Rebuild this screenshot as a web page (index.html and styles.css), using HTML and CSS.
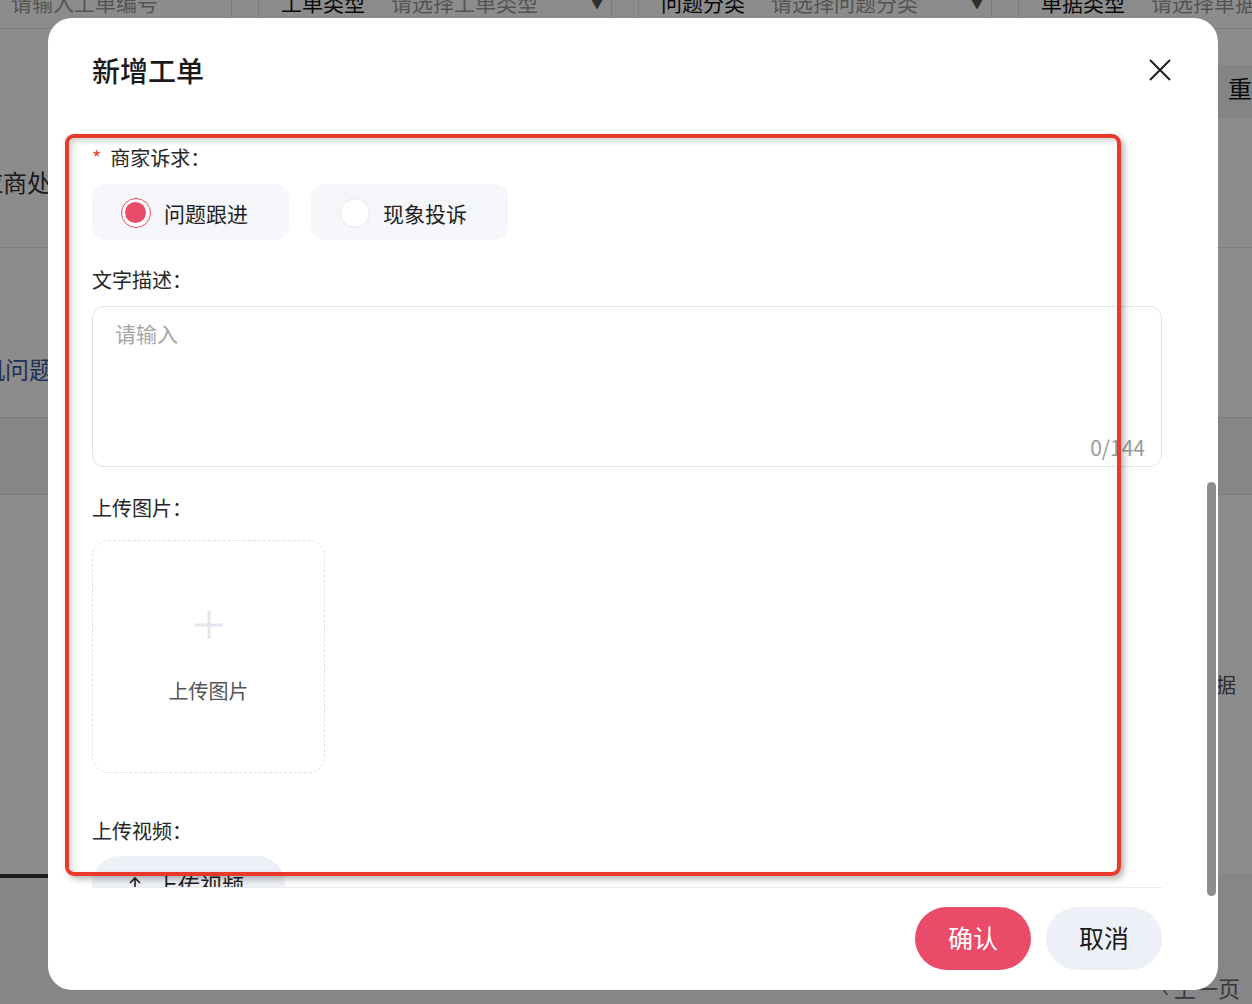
FILE: index.html
```html
<!DOCTYPE html>
<html lang="zh-CN">
<head>
  <meta charset="UTF-8" />
  <meta name="viewport" content="width=device-width, initial-scale=1.0"/>
  <title>新增工单</title>
  <link rel="stylesheet" href="styles.css">
</head>
<body>

  <!-- page behind the dialog -->
  <div class="page">
    <div class="filters">
      <div class="filter first"><span class="ph">请输入工单编号</span></div>
      <div class="filter"><span class="flabel">工单类型</span><span class="ph">请选择工单类型</span><span class="caret">▼</span></div>
      <div class="filter"><span class="flabel">问题分类</span><span class="ph">请选择问题分类</span><span class="caret">▼</span></div>
      <div class="filter"><span class="flabel">单据类型</span><span class="ph">请选择单据类型</span><span class="caret">▼</span></div>
    </div>
    <div class="toolbar">
      <span class="reset-btn">重置</span>
    </div>
    <div class="row row-a"><span class="cell-text">供应商处理</span></div>
    <div class="row row-b"><span class="cell-link">手机问题</span></div>
    <div class="row row-band"></div>
    <div class="row row-empty"><span class="empty-text">暂无数据</span></div>
    <div class="hscroll"></div>
    <div class="pager"><span>‹ 上一页</span></div>
  </div>

  <div class="mask"></div>

  <div class="modal">
    <div class="modal-head">
      <h2 class="modal-title">新增工单</h2>
      <svg class="close" width="22" height="22" viewBox="0 0 22 22">
        <path d="M1 1 L21 21 M21 1 L1 21" stroke="#1f1f1f" stroke-width="2" fill="none"/>
      </svg>
    </div>

    <div class="modal-body">
      <div class="form-item item-appeal">
        <div class="label"><span class="req">*</span>商家诉求：</div>
        <div class="radios">
          <div class="radio checked"><span class="dot"></span>问题跟进</div>
          <div class="radio"><span class="dot"></span>现象投诉</div>
        </div>
      </div>

      <div class="form-item item-desc">
        <div class="label">文字描述：</div>
        <div class="textarea-box">
          <textarea placeholder="请输入"></textarea>
          <div class="count">0/144</div>
        </div>
      </div>

      <div class="form-item item-image">
        <div class="label">上传图片：</div>
        <div class="upload-box">
          <svg class="plus" width="28" height="28" viewBox="0 0 28 28">
            <path d="M14 0 V28 M0 14 H28" stroke="#e2e5ee" stroke-width="3" fill="none"/>
          </svg>
          <span class="upload-text">上传图片</span>
        </div>
      </div>

      <div class="form-item item-video">
        <div class="label">上传视频：</div>
        <div class="video-btn">
          <svg width="14" height="16" viewBox="0 0 14 16">
            <path d="M7 15 V2 M2 7 L7 2 L12 7" stroke="#1f1f1f" stroke-width="1.6" fill="none"/>
          </svg>
          上传视频
        </div>
      </div>
    </div>

    <div class="modal-foot">
      <button class="btn btn-ok">确认</button>
      <button class="btn btn-cancel">取消</button>
    </div>

    <div class="scroll-thumb"></div>
  </div>

  <!-- annotation frame drawn over the screenshot -->
  <div class="annot"></div>

</body>
</html>
```

FILE: styles.css
```css
body {
  margin: 0;
  width: 1252px;
  height: 1004px;
  overflow: hidden;
  position: relative;
  font-family: "Noto Sans CJK SC", "Noto Sans", sans-serif;
  color: #262626;
}

/* ---------- background page ---------- */
.page {
  width: 1252px;
  height: 1004px;
  background-color: #f3f4f6;
  overflow: hidden;
}
.filters {
  display: flex;
  gap: 26px;
  margin-top: -24px;
  margin-left: -122px;
  height: 53px;
  box-sizing: border-box;
  background-color: #fff;
  border-bottom: 1px solid #e6e6e6;
}
.filter {
  flex: 0 0 354px;
  display: flex;
  align-items: center;
  padding-left: 22px;
  box-sizing: border-box;
  border-left: 1px solid #e2e2e2;
  border-right: 1px solid #e2e2e2;
  font-size: 21px;
  white-space: nowrap;
}
.filter.first {
  padding-left: 132px;
}
.flabel {
  color: #111;
  margin-right: 26px;
}
.ph {
  color: #9a9a9a;
}
.caret {
  margin-left: 52px;
  font-size: 14px;
  color: #555;
}
.toolbar {
  height: 86px;
  box-sizing: border-box;
  padding-top: 36px;
  display: flex;
  justify-content: flex-end;
  align-items: flex-start;
  background-color: #fff;
}
.reset-btn {
  display: inline-block;
  width: 70px;
  height: 53px;
  line-height: 46px;
  margin-right: -46px;
  padding-left: 10px;
  background-color: #eef0f4;
  font-size: 24px;
  color: #111;
  position: relative;
}
.row {
  box-sizing: border-box;
  background-color: #fff;
  border-bottom: 1px solid #e4e4e4;
  display: flex;
  align-items: center;
}
.row-a {
  height: 133px;
}
.cell-text {
  margin-left: -45px;
  font-size: 24px;
  color: #333;
  white-space: nowrap;
}
.row-b {
  height: 170px;
  align-items: flex-end;
}
.cell-link {
  margin-left: -43px;
  margin-bottom: 31px;
  font-size: 24px;
  color: #3d5a9e;
  white-space: nowrap;
}
.row-band {
  height: 77px;
  background-color: #f2f4f8;
}
.row-empty {
  height: 379px;
  justify-content: flex-end;
  border-bottom: none;
}
.empty-text {
  font-size: 20px;
  color: #555;
  margin-right: 16px;
  white-space: nowrap;
}
.hscroll {
  width: 200px;
  height: 4px;
  background-color: #333;
}
.pager {
  display: flex;
  justify-content: flex-end;
  padding: 93px 12px 0 0;
  font-size: 22px;
  color: #666;
}

.mask {
  position: absolute;
  inset: 0;
  background-color: rgba(0, 0, 0, 0.45);
}

/* ---------- dialog ---------- */
.modal {
  position: absolute;
  left: 48px;
  top: 18px;
  width: 1170px;
  height: 972px;
  background-color: #fff;
  border-radius: 24px;
  display: flex;
  flex-direction: column;
}
.modal-head {
  display: flex;
  justify-content: space-between;
  align-items: center;
  height: 40px;
  padding: 32px 47px 0 44px;
}
.modal-title {
  margin: 0;
  font-size: 28px;
  font-weight: 500;
  color: #1a1a1a;
}
.modal-body {
  height: 744px;
  overflow: hidden;
  margin: 0 56px 0 44px;
  padding-top: 54px;
  border-bottom: 1px solid #ececec;
}
.label {
  font-size: 20px;
  line-height: 28px;
  color: #262626;
}
.req {
  color: #e8432e;
  margin-right: 9px;
}
.item-desc {
  margin-top: 26px;
}
.item-image {
  margin-top: 27px;
}
.item-video {
  margin-top: 44px;
}
.radios {
  display: flex;
  gap: 22px;
  margin-top: 12px;
}
.radio {
  width: 197px;
  height: 56px;
  box-sizing: border-box;
  padding-left: 29px;
  padding-top: 2px;
  display: flex;
  align-items: center;
  gap: 13px;
  background-color: #f5f6f9;
  border-radius: 14px;
  font-size: 21px;
  color: #1f1f1f;
}
.dot {
  width: 30px;
  height: 30px;
  box-sizing: border-box;
  border-radius: 50%;
  border: 1px solid #e6e7ee;
  background-color: #fff;
  position: relative;
}
.radio.checked .dot {
  border: 1.5px solid #e94b69;
}
.radio.checked .dot::after {
  content: "";
  position: absolute;
  left: 3px;
  top: 3px;
  width: 21px;
  height: 21px;
  border-radius: 50%;
  background-color: #e94b69;
}
.textarea-box {
  margin-top: 12px;
  height: 161px;
  box-sizing: border-box;
  border: 1px solid #e3e3ea;
  border-radius: 12px;
  padding: 12px 16px 5px 22px;
  display: flex;
  flex-direction: column;
}
.textarea-box textarea {
  flex: 1;
  border: none;
  outline: none;
  resize: none;
  padding: 0;
  font-family: inherit;
  font-size: 21px;
  line-height: 28px;
  color: #262626;
}
.textarea-box textarea::placeholder {
  color: #a6a6a6;
}
.count {
  text-align: right;
  font-size: 21px;
  line-height: 28px;
  color: #9a9a9a;
}
.upload-box {
  margin-top: 18px;
  width: 233px;
  height: 233px;
  box-sizing: border-box;
  border: 1px dashed #e0e2ea;
  border-radius: 16px;
  display: flex;
  flex-direction: column;
  align-items: center;
}
.plus {
  margin-top: 70px;
}
.upload-text {
  margin-top: 38px;
  font-size: 20px;
  line-height: 28px;
  color: #555;
}
.video-btn {
  margin-top: 11px;
  width: 193px;
  height: 56px;
  box-sizing: border-box;
  padding-left: 36px;
  display: flex;
  align-items: center;
  gap: 14px;
  background-color: #eef0f7;
  border-radius: 28px;
  font-size: 22px;
  color: #1f1f1f;
}
.modal-foot {
  display: flex;
  justify-content: flex-end;
  gap: 15px;
  padding: 19px 56px 20px 0;
}
.btn {
  width: 116px;
  height: 63px;
  padding: 0 0 4px;
  border: none;
  border-radius: 32px;
  font-family: inherit;
  font-size: 25px;
  cursor: pointer;
}
.btn-ok {
  background-color: #e94b69;
  color: #fff;
}
.btn-cancel {
  background-color: #eef0f7;
  color: #1a1a1a;
}
.scroll-thumb {
  position: absolute;
  right: 2px;
  top: 464px;
  width: 9px;
  height: 414px;
  border-radius: 5px;
  background-color: #8d8d8f;
}

.annot {
  position: absolute;
  left: 65px;
  top: 134px;
  width: 1056px;
  height: 742px;
  box-sizing: border-box;
  border: 4.5px solid #e8392b;
  border-radius: 9px;
  box-shadow: 3px 3px 6px rgba(0, 0, 0, 0.3), inset 3px 3px 6px rgba(0, 0, 0, 0.18);
}
```
